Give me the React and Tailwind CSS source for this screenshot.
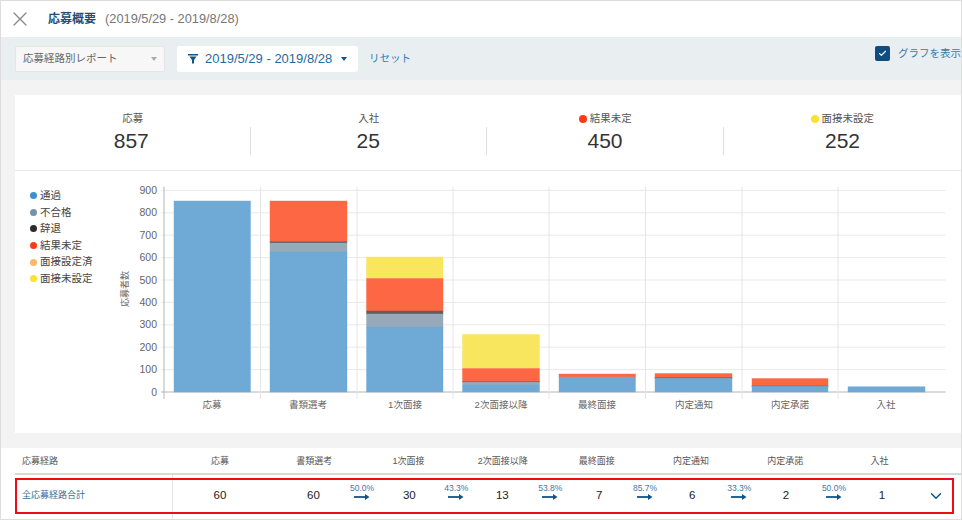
import React from "react";
import { Check, ChevronDown, X } from "lucide-react";

const JP = "font-['Liberation_Sans','Noto_Sans_CJK_JP',sans-serif]";

const stats = [
  { label: "応募", value: "857", cell: "w-[235.5px] pr-[2px] border-r" },
  { label: "入社", value: "25", cell: "w-[236.5px] border-r" },
  { label: "結果未定", value: "450", dot: "bg-[#fb3b17]", cell: "w-[237px] border-r" },
  { label: "面接未設定", value: "252", dot: "bg-[#fbe130]", cell: "w-[237px]" },
];

const legend = [
  { label: "通過", dot: "bg-[#3d8fcf]" },
  { label: "不合格", dot: "bg-[#7592a8]" },
  { label: "辞退", dot: "bg-[#2b2b2b]" },
  { label: "結果未定", dot: "bg-[#fb3b17]" },
  { label: "面接設定済", dot: "bg-[#fbb869]" },
  { label: "面接未設定", dot: "bg-[#fbe130]" },
];

const BLUE = "#6fa9d6";
const GRAY = "#98aaba";
const DARK = "#5f5f5f";
const RED = "#fe6743";
const YELLOW = "#f9e65f";

// each bar: x, width, then [top y, colour] from the top segment down
const bars = [
  { x: 174, w: 76.5, label: "応募", cx: 212, parts: [[201, BLUE]] },
  { x: 270, w: 77, label: "書類選考", cx: 308, parts: [[201, RED], [241.5, DARK], [243, GRAY], [252, BLUE]] },
  { x: 366.5, w: 76.5, label: "1次面接", cx: 405, parts: [[257, YELLOW], [278.5, RED], [311, DARK], [314, GRAY], [327, BLUE]] },
  { x: 462.5, w: 77, label: "2次面接以降", cx: 501, parts: [[334.5, YELLOW], [368.5, RED], [381.5, DARK], [382.5, GRAY], [385, BLUE]] },
  { x: 559, w: 76.5, label: "最終面接", cx: 597, parts: [[374, RED], [377, BLUE]] },
  { x: 655, w: 77, label: "内定通知", cx: 694, parts: [[373.5, RED], [377.5, DARK], [378.5, BLUE]] },
  { x: 752, w: 76, label: "内定承諾", cx: 790, parts: [[378.5, RED], [386, DARK], [386.5, BLUE]] },
  { x: 848, w: 77, label: "入社", cx: 886, parts: [[386.7, BLUE]] },
];

const gridX = [164, 260.5, 357, 453, 549, 645.5, 742, 838];
const ticks = [900, 800, 700, 600, 500, 400, 300, 200, 100, 0];
const Y0 = 392;
const tickY = (t) => Y0 - (t / 100) * 22.4;

const FunnelChart = () => (
  <svg width="846" height="263" viewBox="112 171 846 263" className="block shrink-0" fontFamily="'Liberation Sans','Noto Sans CJK JP',sans-serif">
    {ticks.map((t) => (
      <g key={t}>
        <line x1="161" x2="945.5" y1={tickY(t)} y2={tickY(t)} stroke={t === 0 ? "#b5b5b5" : "#e9e9e9"} />
        <text x="157" y={tickY(t) + 3.5} textAnchor="end" fontSize="10.5" fill="#666666">{t}</text>
      </g>
    ))}
    {gridX.map((x, i) => (
      <line key={x} x1={x} x2={x} y1="186.5" y2="399" stroke={i === 0 ? "#b5b5b5" : "#e6e6e6"} />
    ))}
    {bars.map((b) => (
      <g key={b.label}>
        {b.parts.map(([top, color], i) => {
          const next = i + 1 < b.parts.length ? b.parts[i + 1][0] : Y0;
          return <rect key={i} x={b.x} y={top} width={b.w} height={next - top} fill={color} stroke={color} strokeOpacity="0.4" />;
        })}
        <text x={b.cx} y="407.5" textAnchor="middle" fontSize="9.5" fill="#666666">{b.label}</text>
      </g>
    ))}
    <text transform="translate(128 289) rotate(-90)" textAnchor="middle" fontSize="9" fill="#666666">応募者数</text>
  </svg>
);

const Arrow = ({ rate, width }) => (
  <div className={`mb-[8px] flex shrink-0 flex-col items-center ${width}`}>
    <span className="text-[8.5px] leading-[11px] text-[#3b79a8]">{rate}</span>
    <svg width="16" height="8" viewBox="0 0 16 8" className="-mt-[1px]">
      <path d="M0 4h13" stroke="#0f5488" strokeWidth="1.8" />
      <path d="M11 1l4.5 3L11 7z" fill="#0f5488" />
    </svg>
  </div>
);

const Num = ({ width, children }) => (
  <span className={`shrink-0 text-center text-[11.5px] text-[#222222] ${width}`}>{children}</span>
);

const tableHead = ["応募", "書類選考", "1次面接", "2次面接以降", "最終面接", "内定通知", "内定承諾", "入社"];

const App = () => {
  return (
    <div className={`flex h-[520px] w-[962px] flex-col overflow-hidden border border-[#dddddd] bg-[#f3f3f3] ${JP}`}>
      <div className="flex h-[36px] shrink-0 items-center bg-white">
        <X className="ml-[7px] size-[24px] text-[#8a8a8a]" strokeWidth={1.4} />
        <span className="ml-[16px] text-[12px] font-bold text-[#1e5079]">応募概要</span>
        <span className="ml-[9px] text-[12.8px] text-[#777777]">(2019/5/29 - 2019/8/28)</span>
      </div>

      <div className="relative flex h-[43px] shrink-0 items-center bg-[#e9eef1] pl-[14px]">
        <div className="flex h-[26px] w-[150px] items-center justify-between rounded-[2px] border border-[#e5e5e5] bg-[#f7f7f7] pl-[7px] pr-[7px] text-[10.5px] text-[#666666]">
          応募経路別レポート
          <span className="h-0 w-0 border-x-[3.5px] border-t-[4px] border-x-transparent border-t-[#aaaaaa]" />
        </div>
        <div className="ml-[12px] flex h-[26px] w-[181px] items-center rounded-[3px] bg-white pl-[11px] text-[13px] text-[#1f6a9f]">
          <svg width="10" height="10" viewBox="0 0 10 10" className="shrink-0">
            <path d="M0 0h10v1.6H0z M1.4 2.6h7.2L6 6v3.6H4V6z" fill="#0f5488" />
          </svg>
          <span className="ml-[7px]">2019/5/29 - 2019/8/28</span>
          <span className="ml-[9px] h-0 w-0 border-x-[3.5px] border-t-[4px] border-x-transparent border-t-[#0f5488]" />
        </div>
        <span className="ml-[11px] text-[10.5px] text-[#2d7bb3]">リセット</span>
        <div className="absolute right-0 top-[9px] flex items-center">
          <span className="flex size-[15px] items-center justify-center rounded-[2px] bg-[#0f4c81]">
            <Check className="size-[9px] text-white" strokeWidth={3} />
          </span>
          <span className="ml-[8px] text-[10.5px] text-[#3b79a8]">グラフを表示</span>
        </div>
      </div>

      <div className="ml-[14px] mt-[15px] flex h-[338px] shrink-0 flex-col bg-white">
        <div className="flex h-[76px] shrink-0 border-b border-[#e8e8e8] pt-[17px]">
          {stats.map((s) => (
            <div key={s.label} className="flex shrink-0 flex-col items-center">
              <span className="flex h-[14px] items-center text-[10.5px] text-[#555555]">
                {s.dot && <span className={`mr-[3px] size-[7.5px] rounded-full ${s.dot}`} />}
                {s.label}
              </span>
              <span className={`mt-[1px] flex h-[28px] items-center justify-center border-[#dddddd] pb-[1px] text-[21px] text-[#333333] ${s.cell}`}>
                {s.value}
              </span>
            </div>
          ))}
        </div>
        <div className="flex">
          <div className="flex w-[97px] shrink-0 flex-col pl-[15px] pt-[16.5px]">
            {legend.map((l) => (
              <span key={l.label} className="flex h-[16.6px] items-center text-[10.5px] text-[#444444]">
                <span className={`mr-[3px] size-[7px] rounded-full ${l.dot}`} />
                {l.label}
              </span>
            ))}
          </div>
          <FunnelChart />
        </div>
      </div>

      <div className="mt-[15px] flex min-h-0 flex-1 flex-col bg-white pl-[14px]">
        <div className="flex h-[27px] shrink-0 items-center border-b-2 border-[#d8d8d8] pl-[7px] pt-[3px] text-[9px] text-[#555555]">
          <span className="w-[151px] shrink-0">応募経路</span>
          {tableHead.map((h) => (
            <span key={h} className="w-[94.2px] shrink-0 text-center">{h}</span>
          ))}
        </div>
        <div className="relative flex min-h-0 flex-1 items-center pb-[2px]">
          <div className="-mb-[2px] flex h-[44px] w-[158px] shrink-0 items-center border-r border-[#e5e5e5] pb-[2px] pl-[7px] text-[9px] text-[#3b6f9b]">
            全応募経路合計
          </div>
          <Num width="w-[94px]">60</Num>
          <Num width="w-[63px] ml-[15px]">60</Num>
          <Arrow rate="50.0%" width="w-[34px]" />
          <Num width="w-[60.6px]">30</Num>
          <Arrow rate="43.3%" width="w-[33.4px]" />
          <Num width="w-[58.6px]">13</Num>
          <Arrow rate="53.8%" width="w-[37.4px]" />
          <Num width="w-[60.6px]">7</Num>
          <Arrow rate="85.7%" width="w-[30.8px]" />
          <Num width="w-[63.8px]">6</Num>
          <Arrow rate="33.3%" width="w-[30.2px]" />
          <Num width="w-[63.2px]">2</Num>
          <Arrow rate="50.0%" width="w-[32.8px]" />
          <Num width="w-[63.2px]">1</Num>
          <ChevronDown className="ml-[13px] size-[18px] text-[#0f5488]" strokeWidth={2} />
          <div className="absolute left-0 top-[3px] h-[36px] w-[939px] border-2 border-[#ee0b16]" />
        </div>
      </div>
    </div>
  );
};

export default App;
